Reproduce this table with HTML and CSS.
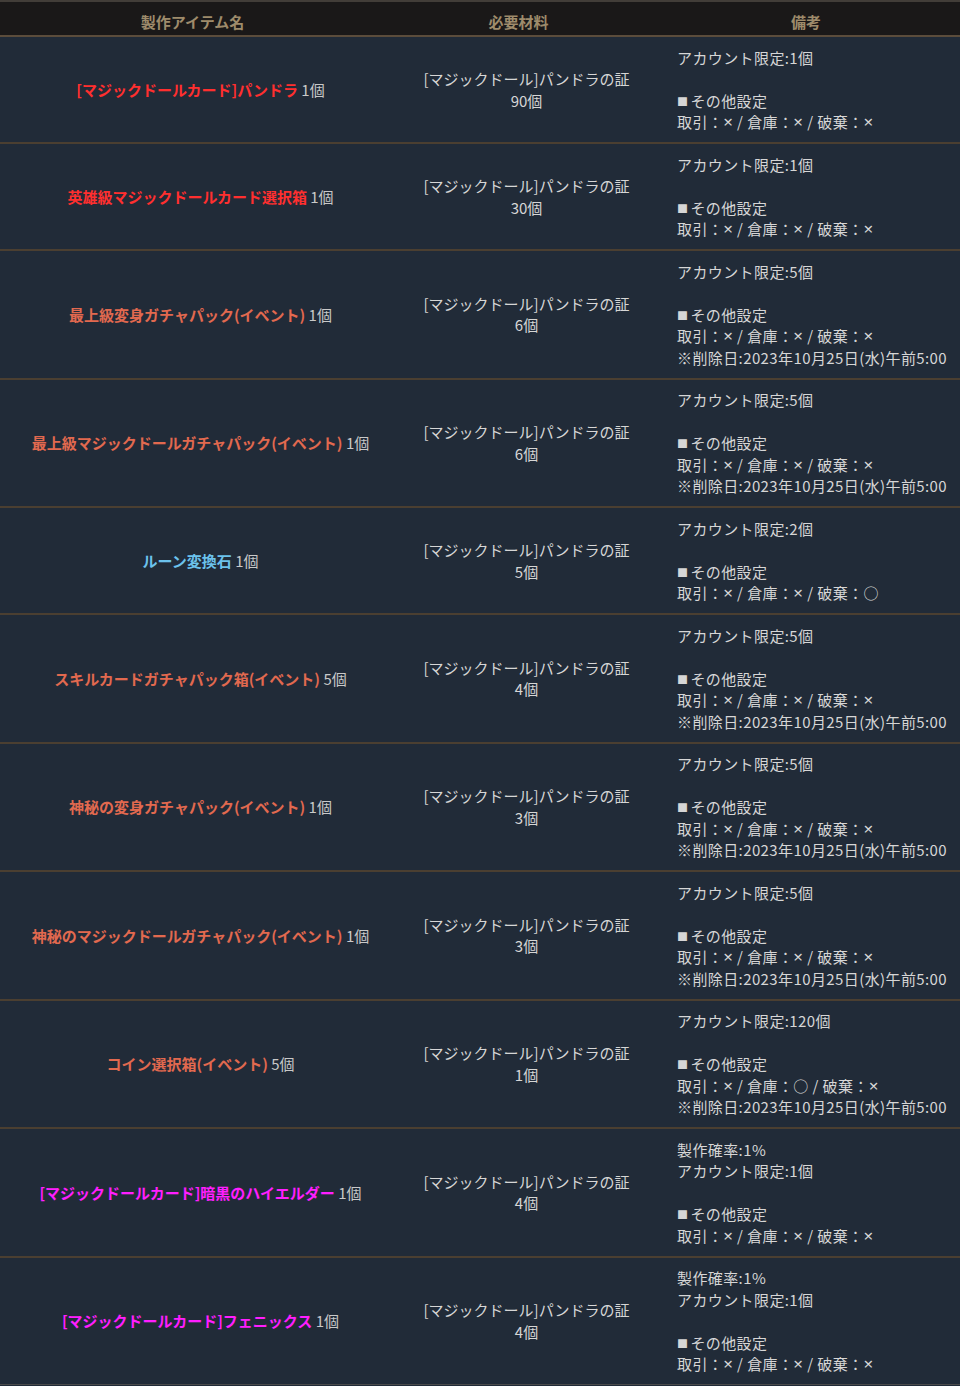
FILE: index.html
```html
<!DOCTYPE html>
<html lang="ja">
<head>
    <meta charset="UTF-8">
    <title>製作アイテム一覧</title>
    <link rel="stylesheet" href="styles.css">
</head>
<body>

    <!-- Craft Table -->
    <table class="craft-table">
        <colgroup>
            <col class="col-item">
            <col class="col-mat">
            <col class="col-note">
        </colgroup>
        <thead>
            <tr>
                <th>製作アイテム名</th>
                <th>必要材料</th>
                <th>備考</th>
            </tr>
        </thead>
        <tbody>
            <tr>
                <td class="item"><span class="name red">[マジックドールカード]パンドラ</span> 1個</td>
                <td class="mat">[マジックドール]パンドラの証<br>90個</td>
                <td class="note">アカウント限定:1個<br><br><span class="sq">■</span>その他設定<br>取引：<span class="x">×</span> / 倉庫：<span class="x">×</span> / 破棄：<span class="x">×</span></td>
            </tr>
            <tr>
                <td class="item"><span class="name red">英雄級マジックドールカード選択箱</span> 1個</td>
                <td class="mat">[マジックドール]パンドラの証<br>30個</td>
                <td class="note">アカウント限定:1個<br><br><span class="sq">■</span>その他設定<br>取引：<span class="x">×</span> / 倉庫：<span class="x">×</span> / 破棄：<span class="x">×</span></td>
            </tr>
            <tr>
                <td class="item"><span class="name salmon">最上級変身ガチャパック(イベント)</span> 1個</td>
                <td class="mat">[マジックドール]パンドラの証<br>6個</td>
                <td class="note">アカウント限定:5個<br><br><span class="sq">■</span>その他設定<br>取引：<span class="x">×</span> / 倉庫：<span class="x">×</span> / 破棄：<span class="x">×</span><br>※削除日:2023年10月25日(水)午前5:00</td>
            </tr>
            <tr>
                <td class="item"><span class="name salmon">最上級マジックドールガチャパック(イベント)</span> 1個</td>
                <td class="mat">[マジックドール]パンドラの証<br>6個</td>
                <td class="note">アカウント限定:5個<br><br><span class="sq">■</span>その他設定<br>取引：<span class="x">×</span> / 倉庫：<span class="x">×</span> / 破棄：<span class="x">×</span><br>※削除日:2023年10月25日(水)午前5:00</td>
            </tr>
            <tr>
                <td class="item"><span class="name blue">ルーン変換石</span> 1個</td>
                <td class="mat">[マジックドール]パンドラの証<br>5個</td>
                <td class="note">アカウント限定:2個<br><br><span class="sq">■</span>その他設定<br>取引：<span class="x">×</span> / 倉庫：<span class="x">×</span> / 破棄：○</td>
            </tr>
            <tr>
                <td class="item"><span class="name salmon">スキルカードガチャパック箱(イベント)</span> 5個</td>
                <td class="mat">[マジックドール]パンドラの証<br>4個</td>
                <td class="note">アカウント限定:5個<br><br><span class="sq">■</span>その他設定<br>取引：<span class="x">×</span> / 倉庫：<span class="x">×</span> / 破棄：<span class="x">×</span><br>※削除日:2023年10月25日(水)午前5:00</td>
            </tr>
            <tr>
                <td class="item"><span class="name salmon">神秘の変身ガチャパック(イベント)</span> 1個</td>
                <td class="mat">[マジックドール]パンドラの証<br>3個</td>
                <td class="note">アカウント限定:5個<br><br><span class="sq">■</span>その他設定<br>取引：<span class="x">×</span> / 倉庫：<span class="x">×</span> / 破棄：<span class="x">×</span><br>※削除日:2023年10月25日(水)午前5:00</td>
            </tr>
            <tr>
                <td class="item"><span class="name salmon">神秘のマジックドールガチャパック(イベント)</span> 1個</td>
                <td class="mat">[マジックドール]パンドラの証<br>3個</td>
                <td class="note">アカウント限定:5個<br><br><span class="sq">■</span>その他設定<br>取引：<span class="x">×</span> / 倉庫：<span class="x">×</span> / 破棄：<span class="x">×</span><br>※削除日:2023年10月25日(水)午前5:00</td>
            </tr>
            <tr>
                <td class="item"><span class="name salmon">コイン選択箱(イベント)</span> 5個</td>
                <td class="mat">[マジックドール]パンドラの証<br>1個</td>
                <td class="note">アカウント限定:120個<br><br><span class="sq">■</span>その他設定<br>取引：<span class="x">×</span> / 倉庫：○ / 破棄：<span class="x">×</span><br>※削除日:2023年10月25日(水)午前5:00</td>
            </tr>
            <tr>
                <td class="item"><span class="name magenta">[マジックドールカード]暗黒のハイエルダー</span> 1個</td>
                <td class="mat">[マジックドール]パンドラの証<br>4個</td>
                <td class="note">製作確率:1%<br>アカウント限定:1個<br><br><span class="sq">■</span>その他設定<br>取引：<span class="x">×</span> / 倉庫：<span class="x">×</span> / 破棄：<span class="x">×</span></td>
            </tr>
            <tr>
                <td class="item"><span class="name magenta">[マジックドールカード]フェニックス</span> 1個</td>
                <td class="mat">[マジックドール]パンドラの証<br>4個</td>
                <td class="note">製作確率:1%<br>アカウント限定:1個<br><br><span class="sq">■</span>その他設定<br>取引：<span class="x">×</span> / 倉庫：<span class="x">×</span> / 破棄：<span class="x">×</span></td>
            </tr>
        </tbody>
    </table>

</body>
</html>
```

FILE: styles.css
```css
/* Base */
body {
    margin: 0;
    padding: 0;
    background-color: #212b38;
    font-family: 'Noto Sans CJK JP', 'Noto Sans', sans-serif;
    font-size: 15px;
    color: #d6d6d6;
}

/* Table */
.craft-table {
    width: 960px;
    border-collapse: collapse;
    table-layout: fixed;
    line-height: 21.5px;
}

.col-item { width: 385px; }
.col-mat  { width: 267px; }
.col-note { width: 308px; }

.craft-table th {
    background-color: #1a1818;
    color: #9e8b6b;
    font-weight: bold;
    line-height: 22px;
    padding: 9px 0 2px;
    border-top: 2px solid #423d38;
    border-bottom: 2px solid #5b4c3b;
}

.craft-table td {
    background-color: #212b38;
    border-bottom: 2px solid #4b3f31;
    padding: 9.5px 0 9.5px 16px;
    vertical-align: middle;
}

.craft-table tr:last-child td {
    border-bottom: 1px solid #4a4a4a;
}

/* Cells */
.item {
    text-align: center;
    color: #c9c9c9;
}

.mat {
    text-align: center;
}

.craft-table td.note {
    text-align: left;
    padding-left: 25px;
    white-space: nowrap;
    letter-spacing: 0.4px;
}

.sq {
    font-size: 11px;
    line-height: 0;
    vertical-align: 1px;
    margin-right: 2px;
}

.x {
    font-family: 'Noto Sans', sans-serif;
    font-size: 17px;
    line-height: 0;
}

/* Item name colours */
.name {
    font-weight: bold;
}

.red     { color: #ff2f2f; }
.salmon  { color: #e2694f; }
.blue    { color: #6cc2ec; }
.magenta { color: #ff1eff; }
```
